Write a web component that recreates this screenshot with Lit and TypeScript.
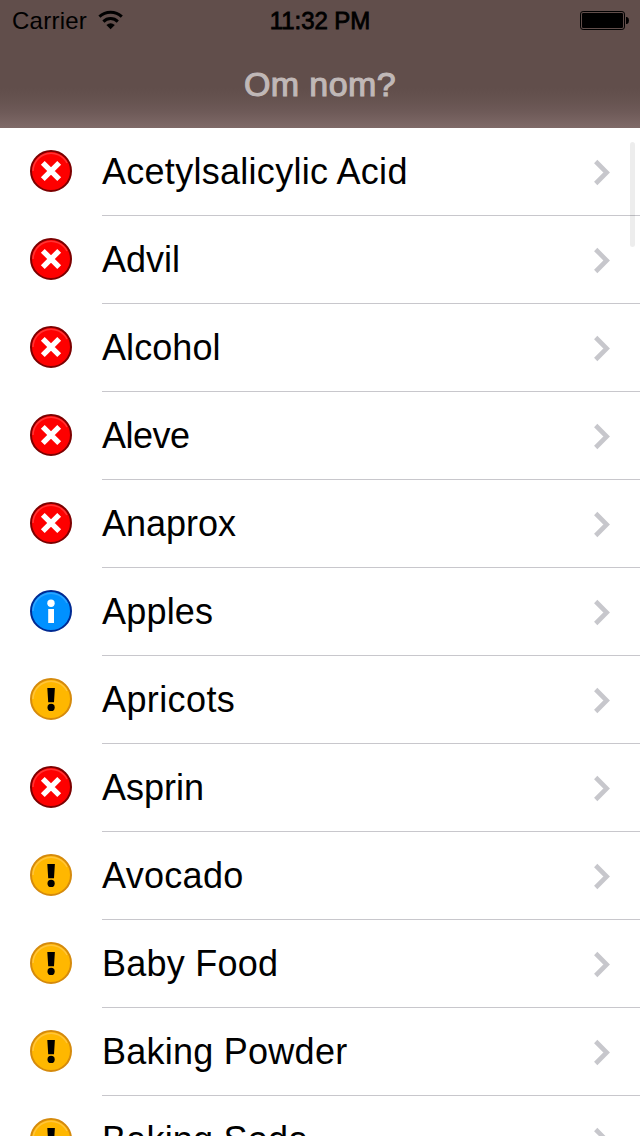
import { LitElement, html, css, svg } from "lit";
import { customElement, property } from "lit/decorators.js";

type Level = "danger" | "info" | "caution";

interface Food {
  name: string;
  level: Level;
  spacing?: number;
}

const FOODS: Food[] = [
  { name: "Acetylsalicylic Acid", level: "danger", spacing: 0.28 },
  { name: "Advil", level: "danger" },
  { name: "Alcohol", level: "danger", spacing: 0.08 },
  { name: "Aleve", level: "danger", spacing: -0.5 },
  { name: "Anaprox", level: "danger" },
  { name: "Apples", level: "info", spacing: 0.2 },
  { name: "Apricots", level: "caution", spacing: 0.4 },
  { name: "Asprin", level: "danger" },
  { name: "Avocado", level: "caution", spacing: 0.3 },
  { name: "Baby Food", level: "caution", spacing: 0.25 },
  { name: "Baking Powder", level: "caution", spacing: 0.25 },
  { name: "Baking Soda", level: "caution", spacing: 0.2 },
];

const COLORS: Record<Level, { fill: string; ring: string; shine: string }> = {
  danger: { fill: "#fe0000", ring: "#7c0000", shine: "#ff3434" },
  info: { fill: "#0091ff", ring: "#002a92", shine: "#2ea5ff" },
  caution: { fill: "#ffb700", ring: "#d58a0c", shine: "#ffc43c" },
};

@customElement("level-badge")
export class LevelBadge extends LitElement {
  @property() level: Level = "danger";

  static styles = css`
    :host { display: block; width: 42px; height: 42px; }
    svg { display: block; }
  `;

  private glyph() {
    if (this.level === "danger") {
      return svg`<path d="M12.8 12.8 29.2 29.2M29.2 12.8 12.8 29.2" stroke="#fff" stroke-width="5.4" fill="none"/>`;
    }
    if (this.level === "info") {
      return svg`<circle cx="21" cy="13.3" r="3.7" fill="#fff"/><path d="M18.2 19h5.8v14h-5.8z" fill="#fff"/>`;
    }
    return svg`<path d="M17.3 10h7.6l-.9 14.2h-5.8z"/><circle cx="21.1" cy="29.4" r="3.6"/>`;
  }

  render() {
    const c = COLORS[this.level];
    return html`
      <svg width="42" height="42" viewBox="0 0 42 42">
        <circle cx="21" cy="21" r="20" fill=${c.fill} stroke=${c.ring} stroke-width="2" />
        <path d="M3 21A18 18 0 0 1 37 13" fill="none" stroke=${c.shine} stroke-width="1.5" />
        ${this.glyph()}
      </svg>
    `;
  }
}

@customElement("food-row")
export class FoodRow extends LitElement {
  @property({ attribute: false }) food!: Food;

  static styles = css`
    :host { display: flex; height: 88px; padding-left: 30px; box-sizing: border-box; }
    level-badge { margin: 22px 30px 0 0; flex: none; }
    .body {
      flex: 1;
      display: flex;
      align-items: center;
      justify-content: space-between;
      box-sizing: border-box;
      border-bottom: 1px solid #c8c7cc;
      padding-right: 28px;
    }
    .name { font-size: 36px; line-height: 42px; color: #000; white-space: nowrap; padding-top: 1px; }
    svg { display: block; margin-top: 1px; }
  `;

  render() {
    return html`
      <level-badge .level=${this.food.level}></level-badge>
      <div class="body">
        <span class="name" style="letter-spacing:${this.food.spacing ?? 0}px">${this.food.name}</span>
        <svg width="20" height="28" viewBox="0 0 20 28">
          <path d="M3.7 3.5 14.7 14.5 3.7 25.5" fill="none" stroke="#c7c7cc" stroke-width="4.6" />
        </svg>
      </div>
    `;
  }
}

@customElement("app-root")
export class AppRoot extends LitElement {
  static styles = css`
    :host {
      display: block;
      position: relative;
      width: 640px;
      height: 1136px;
      overflow: hidden;
      background: #fff;
      font-family: "Liberation Sans", Arial, sans-serif;
    }
    header {
      height: 128px;
      background: linear-gradient(#614e4b 0 88px, #665350 100px, #6e5a58 112px, #7e6967 127px, #7e6967);
    }
    .status {
      height: 40px;
      display: grid;
      grid-template-columns: 1fr auto 1fr;
      align-items: center;
      font-size: 24px;
      line-height: 28px;
      color: #000;
    }
    .left { display: flex; align-items: center; padding-left: 12px; gap: 11px; }
    .carrier { letter-spacing: 0.25px; padding-top: 2px; }
    .time { padding-top: 2px; -webkit-text-stroke: 0.8px #000; letter-spacing: -0.05px; }
    .right { display: flex; justify-content: flex-end; padding-right: 10px; }
    svg { display: block; }
    h1 {
      margin: 0;
      height: 88px;
      text-align: center;
      font-size: 34px;
      line-height: 88px;
      font-weight: 400;
      color: #c0b8b7;
      -webkit-text-stroke: 1.1px #c0b8b7;
      letter-spacing: 0.4px;
    }
    .scroll {
      position: absolute;
      top: 142px;
      right: 5px;
      width: 5px;
      height: 105px;
      border-radius: 2.5px;
      background: rgba(0, 0, 0, 0.07);
    }
  `;

  render() {
    return html`
      <header>
        <div class="status">
          <div class="left">
            <span class="carrier">Carrier</span>
            <svg width="26" height="20" viewBox="0 0 26 20">
              <path d="M1.4 6.6A16.4 16.4 0 0 1 23.8 6.6M5.4 11.6A10.2 10.2 0 0 1 19.8 11.6" fill="none" stroke="#000" stroke-width="3" />
              <path d="M12.6 19.2 8.4 15A6.6 6.6 0 0 1 16.8 15Z" />
            </svg>
          </div>
          <span class="time">11:32 PM</span>
          <div class="right">
            <svg width="50" height="20" viewBox="0 0 50 20">
              <rect x=".5" y="1.5" width="44" height="18" rx="2.6" fill="none" stroke="#000" stroke-width="1" />
              <rect x="2" y="3" width="41" height="15" rx="1.3" />
              <path d="M46 7h1q2 .6 2 3.5T47 14h-1z" />
            </svg>
          </div>
        </div>
        <h1>Om nom?</h1>
      </header>
      <main>${FOODS.map((f) => html`<food-row .food=${f}></food-row>`)}</main>
      <div class="scroll"></div>
    `;
  }
}
